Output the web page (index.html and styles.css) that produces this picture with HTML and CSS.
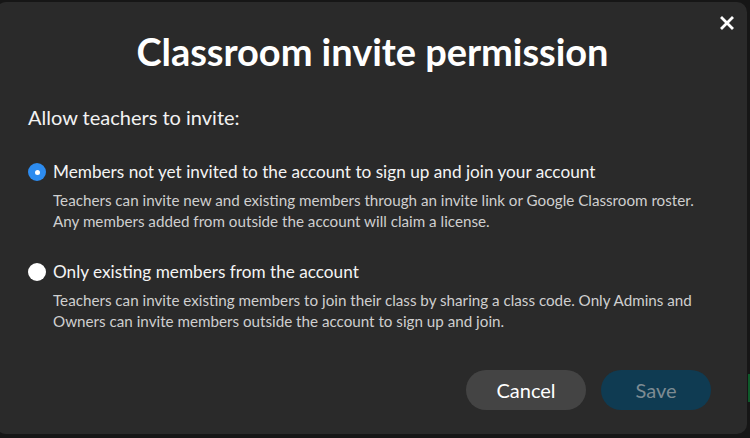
FILE: index.html
```html
<!DOCTYPE html>
<html>
<head>
<meta charset="utf-8">
<link rel="stylesheet" href="styles.css">
</head>
<body>
<div class="edge"></div>
<div class="dialog">
  <button class="close" aria-label="Close">
    <svg width="16" height="16" viewBox="0 0 16 16"><path d="M3 3L13 13M13 3L3 13" stroke="#fff" stroke-width="2.8" stroke-linecap="square"/></svg>
  </button>
  <h1 class="title">Classroom invite permission</h1>
  <p class="lead">Allow teachers to invite:</p>
  <div class="options">
    <label class="option">
      <span class="radio checked"></span>
      <span class="text">
        <span class="label">Members not yet invited to the account to sign up and join your account</span>
        <span class="desc">Teachers can invite new and existing members through an invite link or Google Classroom roster. Any members added from outside the account will claim a license.</span>
      </span>
    </label>
    <label class="option">
      <span class="radio"></span>
      <span class="text">
        <span class="label">Only existing members from the account</span>
        <span class="desc">Teachers can invite existing members to join their class by sharing a class code. Only Admins and Owners can invite members outside the account to sign up and join.</span>
      </span>
    </label>
  </div>
  <div class="actions">
    <button class="btn cancel">Cancel</button>
    <button class="btn save">Save</button>
  </div>
</div>
</body>
</html>
```

FILE: styles.css
```css
html, body {
  margin: 0;
  padding: 0;
  width: 750px;
  height: 438px;
  overflow: hidden;
  background: #161616;
  font-family: Lato, "Noto Sans", sans-serif;
}
body {
  position: relative;
}
.edge {
  position: absolute;
  right: 0;
  top: 374px;
  width: 2px;
  height: 28px;
  background: #0e5a2a;
}
.dialog {
  position: relative;
  box-sizing: border-box;
  margin: 2px 0 0 -4px;
  width: 751px;
  height: 432px;
  background: #2a2a2a;
  border-radius: 10px;
  padding: 0 0 0 32px;
  display: flex;
  flex-direction: column;
  color: #fff;
}
.close {
  position: absolute;
  top: 11px;
  right: 10px;
  width: 20px;
  height: 20px;
  padding: 2px;
  border: 0;
  background: none;
  display: flex;
  align-items: center;
  justify-content: center;
}
.title {
  margin: 26px 0 0 -30px;
  text-align: center;
  font-size: 38px;
  font-weight: 700;
  line-height: 46px;
  letter-spacing: -0.05px;
}
.lead {
  margin: 31px 0 0;
  font-size: 20px;
  line-height: 24px;
  color: #f2f2f2;
}
.options {
  margin-top: 32px;
  display: flex;
  flex-direction: column;
  gap: 29.5px;
}
.option {
  display: flex;
  gap: 7px;
  align-items: flex-start;
}
.radio {
  flex: none;
  box-sizing: border-box;
  width: 18px;
  height: 18px;
  margin-top: 2px;
  border-radius: 50%;
  background: #fff;
  position: relative;
}
.radio.checked {
  background: #2d8cf0;
}
.radio.checked::after {
  content: "";
  position: absolute;
  left: 6.5px;
  top: 6.5px;
  width: 5px;
  height: 5px;
  border-radius: 50%;
  background: #fff;
}
.text {
  display: flex;
  flex-direction: column;
  gap: 6.5px;
}
.label {
  font-size: 17.2px;
  line-height: 22px;
  color: #f4f4f4;
}
.desc {
  font-size: 15.2px;
  line-height: 21px;
  color: #cfcfcf;
  width: 664px;
}
.actions {
  margin-top: auto;
  margin-bottom: 24px;
  padding-right: 36px;
  display: flex;
  justify-content: flex-end;
  gap: 15px;
}
.btn {
  height: 40px;
  border: 0;
  border-radius: 20px;
  font-family: Lato, "Noto Sans", sans-serif;
  font-size: 20px;
  padding: 0;
}
.cancel {
  width: 120px;
  background: #444444;
  color: #ffffff;
}
.save {
  width: 110px;
  background: #0f3b52;
  color: #7d8b93;
}
```
